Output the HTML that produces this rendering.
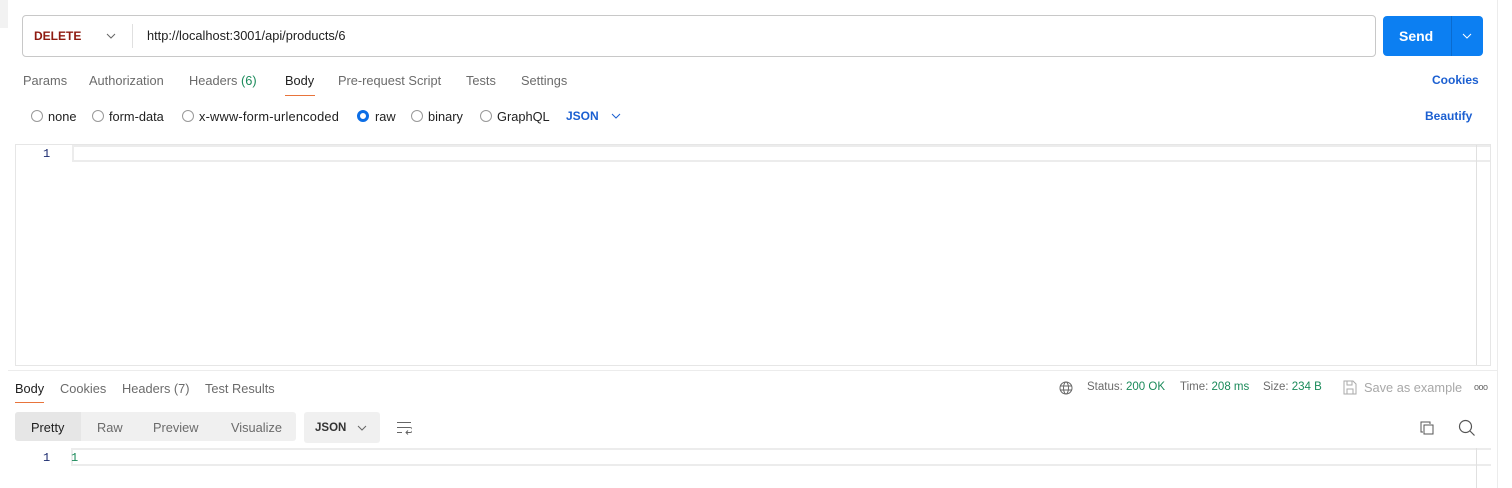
<!DOCTYPE html>
<html><head><style>
*{margin:0;padding:0;box-sizing:border-box}
body{width:1512px;height:488px;background:#fff;font-family:"Liberation Sans",sans-serif;font-size:12.8px;color:#212121;position:relative;overflow:hidden}
.a{position:absolute;white-space:nowrap}
.g{color:#6b6b6b}
.radio{position:absolute;width:12px;height:12px;border:1px solid #999;border-radius:50%}
</style></head><body>
<div class="a" style="left:1497px;top:0;width:1px;height:488px;background:#ececec"></div>
<div class="a" style="left:0;top:0;width:8px;height:28px;background:#f2f2f2"></div>
<div class="a" style="left:8px;top:370px;width:1489px;height:1px;background:#ececec"></div>
<!-- URL bar -->
<div class="a" style="left:22px;top:15px;width:1354px;height:42px;border:1px solid #c8c8c8;border-radius:4px"></div>
<div class="a" style="left:34px;top:29px;color:#8e1a10;font-weight:bold;font-size:12px">DELETE</div>
<svg class="a" style="left:105px;top:32px" width="12" height="8"><path d="M2 2l4 4 4-4" stroke="#666" fill="none"/></svg>
<div class="a" style="left:132px;top:24px;width:1px;height:24px;background:#e0e0e0"></div>
<div class="a" style="left:147px;top:28px;font-size:12.8px">http://localhost:3001/api/products/6</div>
<div class="a" style="left:1383px;top:16px;width:100px;height:40px;background:#0c7ff2;border-radius:4px"></div>
<div class="a" style="left:1451px;top:16px;width:1px;height:40px;background:#0a6bcf"></div>
<div class="a" style="left:1399px;top:28px;color:#fff;font-weight:bold;font-size:14px">Send</div>
<svg class="a" style="left:1461px;top:32px" width="12" height="8"><path d="M2 2l4 4 4-4" stroke="#fff" fill="none"/></svg>
<!-- tabs -->
<div class="a g" style="left:23px;top:73px">Params</div>
<div class="a g" style="left:89px;top:73px">Authorization</div>
<div class="a g" style="left:189px;top:73px">Headers <span style="color:#1a8a5a">(6)</span></div>
<div class="a" style="left:285px;top:73px">Body</div>
<div class="a" style="left:285px;top:95px;width:30px;height:1px;background:#e8743b"></div>
<div class="a g" style="left:338px;top:73px">Pre-request Script</div>
<div class="a g" style="left:466px;top:73px">Tests</div>
<div class="a g" style="left:521px;top:73px">Settings</div>
<div class="a" style="left:1432px;top:73px;color:#1b5fd1;font-weight:bold;font-size:12px">Cookies</div>
<!-- body type -->
<div class="radio" style="left:31px;top:110px"></div><div class="a" style="left:48px;top:109px">none</div>
<div class="radio" style="left:92px;top:110px"></div><div class="a" style="left:109px;top:109px">form-data</div>
<div class="radio" style="left:182px;top:110px"></div><div class="a" style="left:199px;top:109px;letter-spacing:0.2px">x-www-form-urlencoded</div>
<div class="radio" style="left:357px;top:110px;border:3px solid #0c6ee6"></div><div class="a" style="left:375px;top:109px">raw</div>
<div class="radio" style="left:411px;top:110px"></div><div class="a" style="left:428px;top:109px">binary</div>
<div class="radio" style="left:480px;top:110px"></div><div class="a" style="left:497px;top:109px">GraphQL</div>
<div class="a" style="left:566px;top:109px;color:#1b5fd1;font-weight:bold;font-size:12px">JSON</div>
<svg class="a" style="left:610px;top:112px" width="12" height="8"><path d="M2 2l4 4 4-4" stroke="#1b5fd1" fill="none"/></svg>
<div class="a" style="left:1425px;top:109px;color:#1b5fd1;font-weight:bold;font-size:12px">Beautify</div>
<!-- editor -->
<div class="a" style="left:15px;top:144px;width:1476px;height:222px;border:1px solid #e6e6e6"></div>
<div class="a" style="left:72px;top:145px;width:1418px;height:17px;border:2px solid #ececec;border-right:none"></div>
<div class="a" style="left:1476px;top:145px;width:1px;height:220px;background:#e0e0e0"></div>
<div class="a" style="left:43px;top:147px;color:#1a2a6e;font-family:'Liberation Mono',monospace;font-size:12px">1</div>
<!-- response -->
<div class="a" style="left:15px;top:381px">Body</div>
<div class="a" style="left:15px;top:402px;width:29px;height:1px;background:#e8743b"></div>
<div class="a g" style="left:60px;top:381px">Cookies</div>
<div class="a g" style="left:122px;top:381px">Headers (7)</div>
<div class="a g" style="left:205px;top:381px">Test Results</div>
<svg class="a" style="left:1059px;top:381px" width="14" height="14" fill="none" stroke="#666"><circle cx="7" cy="7" r="6"/><ellipse cx="7" cy="7" rx="2.5" ry="6"/><path d="M1 5h12M1 9h12"/></svg>
<div class="a g" style="left:1087px;top:381px;font-size:11.5px">Status: <span style="color:#1a8a5a">200 OK</span></div>
<div class="a g" style="left:1180px;top:381px;font-size:11.5px">Time: <span style="color:#1a8a5a">208 ms</span></div>
<div class="a g" style="left:1263px;top:381px;font-size:11.5px">Size: <span style="color:#1a8a5a">234 B</span></div>
<svg class="a" style="left:1343px;top:380px" width="14" height="15" fill="none" stroke="#aaa"><path d="M1 1h9l3 3v10H1z M4 1v4h5V1 M4 14v-5h6v5"/></svg>
<div class="a" style="left:1364px;top:380px;color:#a8a8a8">Save as example</div>
<div class="a" style="left:1474px;top:382px;color:#666;font-size:9px;letter-spacing:-0.5px">ooo</div>
<div class="a" style="left:15px;top:412px;width:281px;height:29px;background:#f0f0f0;border-radius:3px"></div>
<div class="a" style="left:15px;top:412px;width:66px;height:29px;background:#e6e6e6;border-radius:3px 0 0 3px"></div>
<div class="a" style="left:31px;top:420px">Pretty</div>
<div class="a g" style="left:97px;top:420px">Raw</div>
<div class="a g" style="left:153px;top:420px">Preview</div>
<div class="a g" style="left:231px;top:420px">Visualize</div>
<div class="a" style="left:304px;top:412px;width:76px;height:31px;background:#f0f0f0;border-radius:3px"></div>
<div class="a" style="left:315px;top:422px;font-weight:bold;font-size:11.5px;color:#333">JSON</div>
<svg class="a" style="left:356px;top:424px" width="12" height="8"><path d="M2 2l4 4 4-4" stroke="#666" fill="none"/></svg>
<svg class="a" style="left:396px;top:421px" width="16" height="14" fill="none" stroke="#666"><path d="M1 1.5h14M1 6.5h13a2.5 2.5 0 0 1 0 5h-4M12 9.5l-2 2 2 2M1 11.5h5"/></svg>
<svg class="a" style="left:1419px;top:420px" width="16" height="16" fill="none" stroke="#555"><path d="M4 12H2V2h9v2"/><rect x="5" y="5" width="9" height="9"/></svg>
<svg class="a" style="left:1458px;top:419px" width="18" height="18" fill="none" stroke="#555" stroke-width="1.2"><circle cx="7.5" cy="7.5" r="6"/><path d="M12 12l4.5 4.5"/></svg>
<div class="a" style="left:71px;top:448px;width:1420px;height:18px;border:2px solid #ececec;border-right:none"></div>
<div class="a" style="left:1476px;top:448px;width:1px;height:40px;background:#e0e0e0"></div>
<div class="a" style="left:43px;top:451px;color:#1a2a6e;font-family:'Liberation Mono',monospace;font-size:12px">1</div>
<div class="a" style="left:71px;top:451px;color:#1a8a5a;font-family:'Liberation Mono',monospace;font-size:12px">1</div>
</body></html>
